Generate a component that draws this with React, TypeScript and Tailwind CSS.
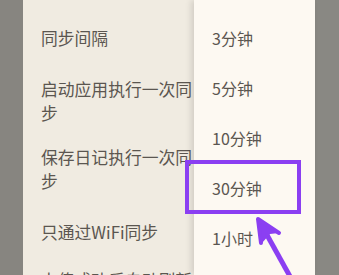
import * as React from "react";

const settings = [
  { label: "同步间隔", gap: "mt-[26px]" },
  { label: "启动应用执行一次同步", gap: "mt-[26px]" },
  { label: "保存日记执行一次同步", gap: "mt-[19px]" },
  { label: "只通过WiFi同步", gap: "mt-[26px]" },
  { label: "上传成功后自动刷新", gap: "mt-[24px]" },
];

const intervals = ["3分钟", "5分钟", "10分钟", "30分钟", "1小时"];

export default function App() {
  return (
    <div
      className="relative flex h-[275px] w-[339px] overflow-hidden bg-[#878580]"
      style={{ fontFamily: '"Noto Sans CJK SC", "Noto Sans", sans-serif' }}
    >
      {/* dimmed edge */}
      <div className="w-[23px] shrink-0 bg-[#878580]" />

      {/* settings panel */}
      <div className="relative w-[292px] shrink-0 bg-[#f0ebe1]">
        <ul className="pl-[18px]">
          {settings.map((s) => (
            <li
              key={s.label}
              className={`${s.gap} w-[158px] text-[16.8px] leading-[24.5px] text-[#5b5650]`}
            >
              {s.label}
            </li>
          ))}
        </ul>

        {/* interval dropdown */}
        <div className="absolute left-[171px] top-0 h-full w-[121px] bg-[#fdf9f2] pt-[13px] shadow-[-3px_0_6px_rgba(0,0,0,0.12)]">
          {intervals.map((t) => (
            <div
              key={t}
              className="flex h-[50px] items-center pl-[18px] text-[16px] text-[#5b5650]"
            >
              {t}
            </div>
          ))}
        </div>
      </div>

      <div className="flex-1 bg-[#898883]" />

      {/* annotation */}
      <div className="absolute left-[185px] top-[160px] h-[54px] w-[116px] border-4 border-[#8b3ff2]" />
      <svg
        className="absolute left-0 top-0"
        width="339"
        height="275"
        viewBox="0 0 339 275"
      >
        <line x1="262" y1="226" x2="292" y2="280" stroke="#8b3ff2" strokeWidth="5" />
        <polygon points="258,219 279,233 270,234 262,243 260,236" fill="#8b3ff2" />
        <path d="M258 219 L279 233 M258 219 L261 243" stroke="#8b3ff2" strokeWidth="4" strokeLinecap="round" fill="none" />
      </svg>
    </div>
  );
}
